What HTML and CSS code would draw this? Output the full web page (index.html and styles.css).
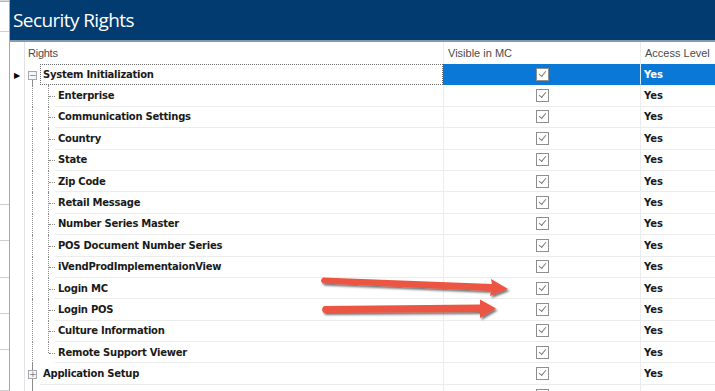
FILE: index.html
```
<!DOCTYPE html>
<html lang="en">
<head>
    <meta charset="UTF-8">
    <title>Security Rights</title>
    <link rel="stylesheet" href="styles.css">
</head>
<body>
    <div class="window">
        <div class="side">
            <div class="side-tool">p</div>
            <div class="side-cell" style="height: 29px"></div>
            <div class="side-cell" style="height: 172px"></div>
            <div class="side-cell" style="height: 35px"></div>
            <div class="side-cell" style="height: 36px"></div>
            <div class="side-cell" style="height: 35px"></div>
            <div class="side-cell" style="height: 35px"></div>
            <div class="side-cell" style="height: 40px"></div>
        </div>

        <div class="main">
            <div class="titlebar">Security Rights</div>

            <div class="grid">
                <div class="row head">
                    <div class="ind"></div>
                    <div class="col-rights">Rights</div>
                    <div class="col-vis">Visible in MC</div>
                    <div class="col-acc">Access Level</div>
                </div>

                <div class="row selected">
                    <div class="ind"><span class="cur">&#9654;</span></div>
                    <div class="col-rights">
                        <span class="root-guide first"><span class="box">&minus;</span></span>
                        <span class="label root focus">System Initialization</span>
                    </div>
                    <div class="col-vis"><span class="chk"></span></div>
                    <div class="col-acc">Yes</div>
                </div>

                <div class="row">
                    <div class="ind"></div>
                    <div class="col-rights"><span class="g0"></span><span class="g1"></span><span class="dash"></span><span class="label">Enterprise</span></div>
                    <div class="col-vis"><span class="chk"></span></div>
                    <div class="col-acc">Yes</div>
                </div>
                <div class="row">
                    <div class="ind"></div>
                    <div class="col-rights"><span class="g0"></span><span class="g1"></span><span class="dash"></span><span class="label">Communication Settings</span></div>
                    <div class="col-vis"><span class="chk"></span></div>
                    <div class="col-acc">Yes</div>
                </div>
                <div class="row">
                    <div class="ind"></div>
                    <div class="col-rights"><span class="g0"></span><span class="g1"></span><span class="dash"></span><span class="label">Country</span></div>
                    <div class="col-vis"><span class="chk"></span></div>
                    <div class="col-acc">Yes</div>
                </div>
                <div class="row">
                    <div class="ind"></div>
                    <div class="col-rights"><span class="g0"></span><span class="g1"></span><span class="dash"></span><span class="label">State</span></div>
                    <div class="col-vis"><span class="chk"></span></div>
                    <div class="col-acc">Yes</div>
                </div>
                <div class="row">
                    <div class="ind"></div>
                    <div class="col-rights"><span class="g0"></span><span class="g1"></span><span class="dash"></span><span class="label">Zip Code</span></div>
                    <div class="col-vis"><span class="chk"></span></div>
                    <div class="col-acc">Yes</div>
                </div>
                <div class="row">
                    <div class="ind"></div>
                    <div class="col-rights"><span class="g0"></span><span class="g1"></span><span class="dash"></span><span class="label">Retail Message</span></div>
                    <div class="col-vis"><span class="chk"></span></div>
                    <div class="col-acc">Yes</div>
                </div>
                <div class="row">
                    <div class="ind"></div>
                    <div class="col-rights"><span class="g0"></span><span class="g1"></span><span class="dash"></span><span class="label">Number Series Master</span></div>
                    <div class="col-vis"><span class="chk"></span></div>
                    <div class="col-acc">Yes</div>
                </div>
                <div class="row">
                    <div class="ind"></div>
                    <div class="col-rights"><span class="g0"></span><span class="g1"></span><span class="dash"></span><span class="label">POS Document Number Series</span></div>
                    <div class="col-vis"><span class="chk"></span></div>
                    <div class="col-acc">Yes</div>
                </div>
                <div class="row">
                    <div class="ind"></div>
                    <div class="col-rights"><span class="g0"></span><span class="g1"></span><span class="dash"></span><span class="label">iVendProdImplementaionView</span></div>
                    <div class="col-vis"><span class="chk"></span></div>
                    <div class="col-acc">Yes</div>
                </div>
                <div class="row">
                    <div class="ind"></div>
                    <div class="col-rights"><span class="g0"></span><span class="g1"></span><span class="dash"></span><span class="label">Login MC</span></div>
                    <div class="col-vis"><span class="chk"></span></div>
                    <div class="col-acc">Yes</div>
                </div>
                <div class="row">
                    <div class="ind"></div>
                    <div class="col-rights"><span class="g0"></span><span class="g1"></span><span class="dash"></span><span class="label">Login POS</span></div>
                    <div class="col-vis"><span class="chk"></span></div>
                    <div class="col-acc">Yes</div>
                </div>
                <div class="row">
                    <div class="ind"></div>
                    <div class="col-rights"><span class="g0"></span><span class="g1"></span><span class="dash"></span><span class="label">Culture Information</span></div>
                    <div class="col-vis"><span class="chk"></span></div>
                    <div class="col-acc">Yes</div>
                </div>
                <div class="row">
                    <div class="ind"></div>
                    <div class="col-rights"><span class="g0"></span><span class="g1 last"></span><span class="dash"></span><span class="label">Remote Support Viewer</span></div>
                    <div class="col-vis"><span class="chk"></span></div>
                    <div class="col-acc">Yes</div>
                </div>

                <div class="row">
                    <div class="ind"></div>
                    <div class="col-rights">
                        <span class="root-guide"><span class="box">+</span></span>
                        <span class="label root">Application Setup</span>
                    </div>
                    <div class="col-vis"><span class="chk"></span></div>
                    <div class="col-acc">Yes</div>
                </div>
                <div class="row">
                    <div class="ind"></div>
                    <div class="col-rights">
                        <span class="root-guide"><span class="box">+</span></span>
                        <span class="label root">Transactions</span>
                    </div>
                    <div class="col-vis"><span class="chk"></span></div>
                    <div class="col-acc">Yes</div>
                </div>
            </div>
        </div>

        <!-- annotation arrows drawn on top of the screenshot -->
        <svg class="arrows" width="715" height="391" viewBox="0 0 715 391">
            <defs>
                <filter id="shade" x="-10%" y="-50%" width="120%" height="200%">
                    <feDropShadow dx="1.5" dy="2" stdDeviation="1.2" flood-color="#000" flood-opacity="0.55"/>
                </filter>
            </defs>
            <g fill="#ec5443" filter="url(#shade)">
                <path d="M323 277.5 L492 284 L491 279 L508 289 L490 296 L491 291 L323 283.5 Q319 280.5 323 277.5 Z"/>
                <path d="M324 306 L480 304.5 L480 299.5 L496 308.5 L480 318 L480 312 L324 313 Q320 309.5 324 306 Z"/>
            </g>
        </svg>
    </div>
</body>
</html>
```

FILE: styles.css
```
html, body {
    margin: 0;
    padding: 0;
    background: #fff;
}
.window {
    position: relative;
    display: flex;
    width: 715px;
    height: 391px;
    overflow: hidden;
    font-family: "DejaVu Sans", Tahoma, sans-serif;
}
.side {
    width: 9px;
    flex: none;
    border-right: 1px solid #a7a7a7;
    display: flex;
    flex-direction: column;
}
.side-tool {
    height: 12px;
    background: #d9d9d9;
    border-bottom: 1px solid #b5b5b5;
    font: bold 10px "DejaVu Sans", sans-serif;
    color: #333;
    line-height: 8px;
    text-align: right;
    overflow: hidden;
}
.side-cell {
    border-bottom: 1px solid #cfcfcf;
    flex: none;
}
.main {
    flex: 1;
    display: flex;
    flex-direction: column;
}
.titlebar {
    height: 40px;
    background: #023b6f;
    border-bottom: 2px solid #8499b4;
    color: #fff;
    font: 19px "Open Sans", "Noto Sans", sans-serif;
    line-height: 41px;
    padding-left: 3px;
    letter-spacing: -0.6px;
}
.grid {
    display: flex;
    flex-direction: column;
}
.row {
    display: grid;
    grid-template-columns: 15px 418px 197px 1fr;
    height: 21.4px;
    flex: none;
}
.row.head {
    height: 22px;
    font: 11px "Liberation Sans", Arial, sans-serif;
    color: #4a4a4a;
}
.head > div {
    display: flex;
    align-items: center;
    padding-left: 4px;
}
.head .ind {
    padding: 0;
}
.head .col-rights {
    padding-left: 3px;
    font-weight: normal;
    font-size: 11px;
    color: #4a4a4a;
}
.ind {
    display: flex;
    align-items: center;
    justify-content: center;
    border-right: 1px solid #e2e2e2;
}
.cur {
    font-size: 8px;
    color: #000;
    margin-top: 1px;
}
.col-rights {
    display: flex;
    align-items: stretch;
    font-weight: bold;
    font-size: 10px;
    letter-spacing: -0.25px;
    color: #1a1a1a;
}
.col-vis {
    border-left: 1px solid #ececec;
    border-bottom: 1px solid #ececec;
    display: flex;
    align-items: center;
    justify-content: center;
    box-sizing: border-box;
}
.col-acc {
    border-left: 1px solid #ececec;
    border-bottom: 1px solid #ececec;
    padding-left: 3px;
    display: flex;
    align-items: center;
    font-weight: bold;
    font-size: 10px;
    color: #1a1a1a;
    box-sizing: border-box;
}
.head .col-vis,
.head .col-acc {
    justify-content: flex-start;
    font-weight: normal;
    font-size: 11px;
    color: #4a4a4a;
    border-bottom: none;
}
.selected .col-vis,
.selected .col-acc {
    background: #0a78d6;
    color: #fff;
    border-color: #0a78d6;
}
.selected .col-acc {
    border-left-color: #d9e8f6;
}

/* tree guides */
.g0 {
    width: 7px;
    border-right: 1px dotted #8c8c8c;
    flex: none;
}
.g1 {
    width: 15px;
    border-right: 1px dotted #8c8c8c;
    flex: none;
}
.g1.last {
    height: 50%;
}
.dash {
    width: 6px;
    flex: none;
    border-top: 1px dotted #8c8c8c;
    align-self: center;
    margin-top: 1px;
}
.root-guide {
    width: 15px;
    flex: none;
    display: flex;
    align-items: center;
    padding-left: 3px;
    box-sizing: border-box;
    background: linear-gradient(#8c8c8c, #8c8c8c) 7px 0 / 1px 100% no-repeat;
}
.root-guide.first {
    background-position: 7px 15px;
}
.box {
    width: 7px;
    height: 7px;
    border: 1px solid #a5a9b1;
    background: #f4f6f9;
    color: #7a8190;
    font: 9px/7px "DejaVu Sans", sans-serif;
    letter-spacing: 0;
    text-align: center;
    margin-top: 1px;
}
.label {
    flex: 1;
    display: flex;
    align-items: center;
    padding-left: 3px;
    border-bottom: 1px solid #ececec;
    white-space: nowrap;
}
.label.focus {
    border: 1px dotted #6b6b6b;
    padding-left: 2px;
}
.chk {
    width: 11px;
    height: 11px;
    border: 1px solid #8e8e8e;
    background: #fff;
    position: relative;
    margin-left: 1px;
}
.chk::after {
    content: "";
    position: absolute;
    left: 2px;
    top: 2px;
    width: 6px;
    height: 3px;
    border-left: 1.5px solid #7b7b7b;
    border-bottom: 1.5px solid #7b7b7b;
    transform: rotate(-50deg);
    transform-origin: center;
}
.arrows {
    position: absolute;
    left: 0;
    top: 0;
    pointer-events: none;
}
```
